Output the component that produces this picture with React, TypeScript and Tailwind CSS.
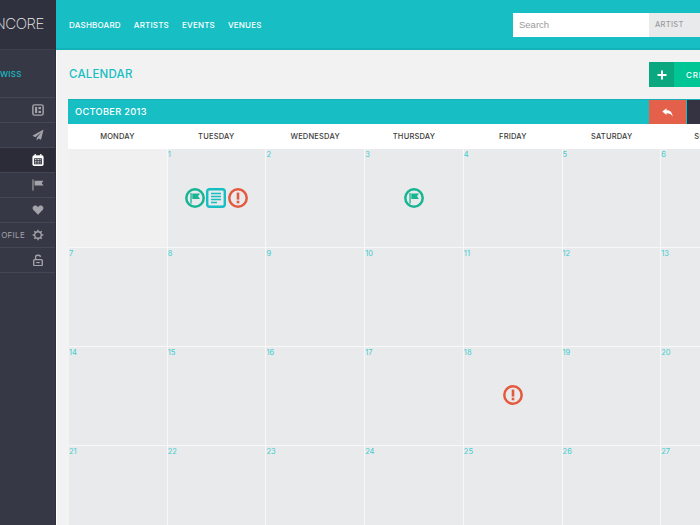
import React from "react";

const F = "[font-family:'Inter','Liberation_Sans',sans-serif]";

function Flag() {
  return (
    <svg width="20" height="20" viewBox="0 0 20 20" className="block">
      <circle cx="10" cy="10" r="8.7" fill="none" stroke="#17b594" strokeWidth="2.5" />
      <rect x="5.4" y="5" width="1.3" height="10.5" fill="#17b594" />
      <path d="M7.3 5.4 L15 5.4 L13 8.2 L15 11 L7.3 11 Z" fill="#17b594" />
    </svg>
  );
}
function Doc() {
  return (
    <svg width="20" height="20" viewBox="0 0 20 20" className="block">
      <rect x="1.2" y="1.2" width="17.6" height="17.6" rx="2.5" fill="none" stroke="#17bec4" strokeWidth="2.4" />
      <path d="M5 5.5H15M5 8.5H15M5 11.5H15M5 14.5H11" stroke="#17bec4" strokeWidth="1.4" />
    </svg>
  );
}
function Alert() {
  return (
    <svg width="20" height="20" viewBox="0 0 20 20" className="block">
      <circle cx="10" cy="10" r="8.7" fill="none" stroke="#e5593f" strokeWidth="2.5" />
      <rect x="8.7" y="4.6" width="2.6" height="7" fill="#e5593f" />
      <rect x="8.7" y="12.7" width="2.6" height="2.6" fill="#e5593f" />
    </svg>
  );
}

const C = "#a3a4aa";
const sideIcons = [
  <svg width="12" height="12" viewBox="0 0 14 14"><rect x="1" y="1" width="12" height="12" rx="2" fill="none" stroke={C} strokeWidth="1.7" /><rect x="3.5" y="3.5" width="2.5" height="7" fill={C} /><rect x="7.5" y="3.5" width="3" height="2.5" fill={C} /><rect x="7.5" y="8" width="3" height="2.5" fill={C} /></svg>,
  <svg width="12" height="12" viewBox="0 0 14 14"><path d="M13.5 0.5 L0.5 8 L4 9.5 L11 3.5 L5.5 10.5 L5.5 13.5 L7.5 11 L10.5 12.5 Z" fill={C} /></svg>,
  <svg width="12" height="12" viewBox="0 0 14 14"><rect x="0.5" y="1.5" width="13" height="12.5" rx="2" fill="#fff" /><rect x="3" y="0" width="1.5" height="2" fill="#fff" /><rect x="9.5" y="0" width="1.5" height="2" fill="#fff" /><rect x="2.5" y="5" width="9" height="7" fill="#2b2c38" /><path d="M3.5 6.5H10.5M3.5 8.5H10.5M3.5 10.5H10.5" stroke="#fff" strokeWidth="1" strokeDasharray="1.2 0.6" /></svg>,
  <svg width="12" height="12" viewBox="0 0 14 14"><rect x="0.5" y="0.5" width="1.3" height="13" fill={C} /><path d="M3 2 L13.5 2 L11.3 4.8 L13.5 7.5 L3 7.5 Z" fill={C} /></svg>,
  <svg width="12" height="12" viewBox="0 0 14 14"><path d="M7 12.5 L1.6 7 C0.2 5.4 0.4 3 2.2 2.2 C4 1.4 6 2 7 3.8 C8 2 10 1.4 11.8 2.2 C13.6 3 13.8 5.4 12.4 7 Z" fill={C} /></svg>,
  <svg width="12" height="12" viewBox="0 0 14 14"><circle cx="7" cy="7" r="3.8" fill="none" stroke={C} strokeWidth="1.5" /><path d="M7 .8V3M7 11V13.2M.8 7H3M11 7H13.2M2.6 2.6L4.2 4.2M9.8 9.8L11.4 11.4M2.6 11.4L4.2 9.8M9.8 4.2L11.4 2.6" stroke={C} strokeWidth="1.6" /></svg>,
  <svg width="12" height="12" viewBox="0 0 14 14"><rect x="2" y="6.5" width="10" height="7" rx="1" fill="none" stroke={C} strokeWidth="1.6" /><path d="M4.2 6.5V3.5C4.2 0.8 9.8 0.8 9.8 3.5" fill="none" stroke={C} strokeWidth="1.5" /><rect x="5" y="9.3" width="4" height="1.4" fill={C} /></svg>,
];
const rows = ["", "", "", "", "", "OFILE", ""];
const days = ["MONDAY", "TUESDAY", "WEDNESDAY", "THURSDAY", "FRIDAY", "SATURDAY", "SUNDAY"];
const nums = Array.from({ length: 28 }, (_, i) => i);
const events: Record<number, React.ReactNode> = {
  1: <><Flag /><Doc /><Alert /></>,
  3: <Flag />,
  18: <Alert />,
};

export default function App() {
  return (
    <div className={`flex w-[700px] h-[525px] overflow-hidden bg-[#f2f2f2] ${F}`}>
      <aside className="w-[56px] shrink-0 flex flex-col bg-[#363845] border-r border-[#30313e] overflow-hidden">
        <div className="h-[50px] shrink-0 flex items-center justify-end pr-[11px] bg-[#30313e] border-b border-[#3f414e] text-[#eceded] text-[15px] font-extralight tracking-[-0.4px]">NCORE</div>
        <div className="h-[48px] shrink-0 flex items-center text-[#17bec4] text-[8px] font-medium tracking-[0.3px] border-b border-[#454753]">WISS</div>
        {sideIcons.map((ic, i) => (
          <div key={i} className={`h-[25px] shrink-0 flex items-center justify-end pr-[11px] gap-[7px] border-b border-[#454753] text-[#a3a4aa] text-[8px] tracking-[0.3px] ${i === 2 ? "bg-[#2b2c38]" : ""}`}>
            {rows[i] && <span>{rows[i]}</span>}
            {ic}
          </div>
        ))}
      </aside>
      <main className="flex-1 min-w-0 flex flex-col">
        <header className="h-[50px] shrink-0 flex items-center bg-[#17bec4] border-b-2 border-[#14b3b9] pl-[13px] pt-[2px]">
          <nav className="flex gap-[13px] text-white text-[8px] font-medium tracking-[0.2px]">
            <span>DASHBOARD</span><span>ARTISTS</span><span>EVENTS</span><span>VENUES</span>
          </nav>
          <div className="ml-auto flex h-[24px] w-[187px] shrink-0 bg-white">
            <div className="w-[136px] flex items-center pl-[6px] text-[#9a9a9a] text-[9.5px] [font-family:'Liberation_Sans',sans-serif]">Search</div>
            <div className="flex-1 flex items-center pl-[6px] bg-[#e9eaeb] text-[#9b9ca0] text-[7.5px] font-medium tracking-[0.3px]">ARTIST</div>
          </div>
        </header>
        <div className="flex-1 min-h-0 pl-[11px] border-l border-white">
          <div className="h-[49px] flex items-center justify-between">
            <h1 className="pl-px text-[#17bec4] text-[11.5px] font-medium tracking-[0.2px]">CALENDAR</h1>
            <div className="flex h-[25px] w-[51px] shrink-0 bg-[#00c595] text-white text-[8px] font-medium tracking-[0.8px]">
              <div className="w-[25px] flex items-center justify-center bg-[#0ba77f]">
                <svg width="10" height="10" viewBox="0 0 10 10"><path d="M5 0.5V9.5M0.5 5H9.5" stroke="#fff" strokeWidth="2" /></svg>
              </div>
              <div className="flex-1 pl-[12px] flex items-center overflow-hidden">CRE</div>
            </div>
          </div>
          <div className="w-[692px]">
            <div className="h-[25px] flex items-stretch bg-[#17bec4] border-t border-[#14b3b9]">
              <div className="flex-1 flex items-center pl-[7px] text-white text-[9.25px] font-medium tracking-[0.3px]">OCTOBER 2013</div>
              <div className="w-[37px] bg-[#e5604a] flex items-center justify-center mr-px">
                <svg width="11" height="9" viewBox="0 0 11 9"><path d="M0.3 3.5 L4.5 0.3 V2.2 C8 2.2 10.5 4 10.5 8.7 C9.5 6.3 7.5 5.3 4.5 5.3 V7 Z" fill="#fff" /></svg>
              </div>
              <div className="w-[73px] bg-[#353241]" />
            </div>
            <div className="grid grid-cols-7 h-[25px] bg-white items-center text-center text-[#3c3c3c] text-[7.5px] font-medium tracking-[0.2px]">
              {days.map((d) => <div key={d}>{d}</div>)}
            </div>
            <div className="grid grid-cols-7 auto-rows-[99px] ml-px">
              {nums.map((n) => (
                <div key={n} className={`relative border-r border-b border-[#f8f8f8] ${n === 0 ? "bg-[#f0f0f1]" : "bg-[#e9eaeb]"}`}>
                  {n > 0 && <span className="block text-[#3fcdd0] text-[7.5px] leading-[12px]">{n}</span>}
                  {events[n] && <div className={`absolute inset-x-0 flex justify-center gap-[1.5px] ${n === 1 ? "pr-[1px]" : "pl-[1px]"} ${n === 18 ? "top-[38px]" : "top-[39px]"}`}>{events[n]}</div>}
                </div>
              ))}
            </div>
          </div>
        </div>
      </main>
    </div>
  );
}
